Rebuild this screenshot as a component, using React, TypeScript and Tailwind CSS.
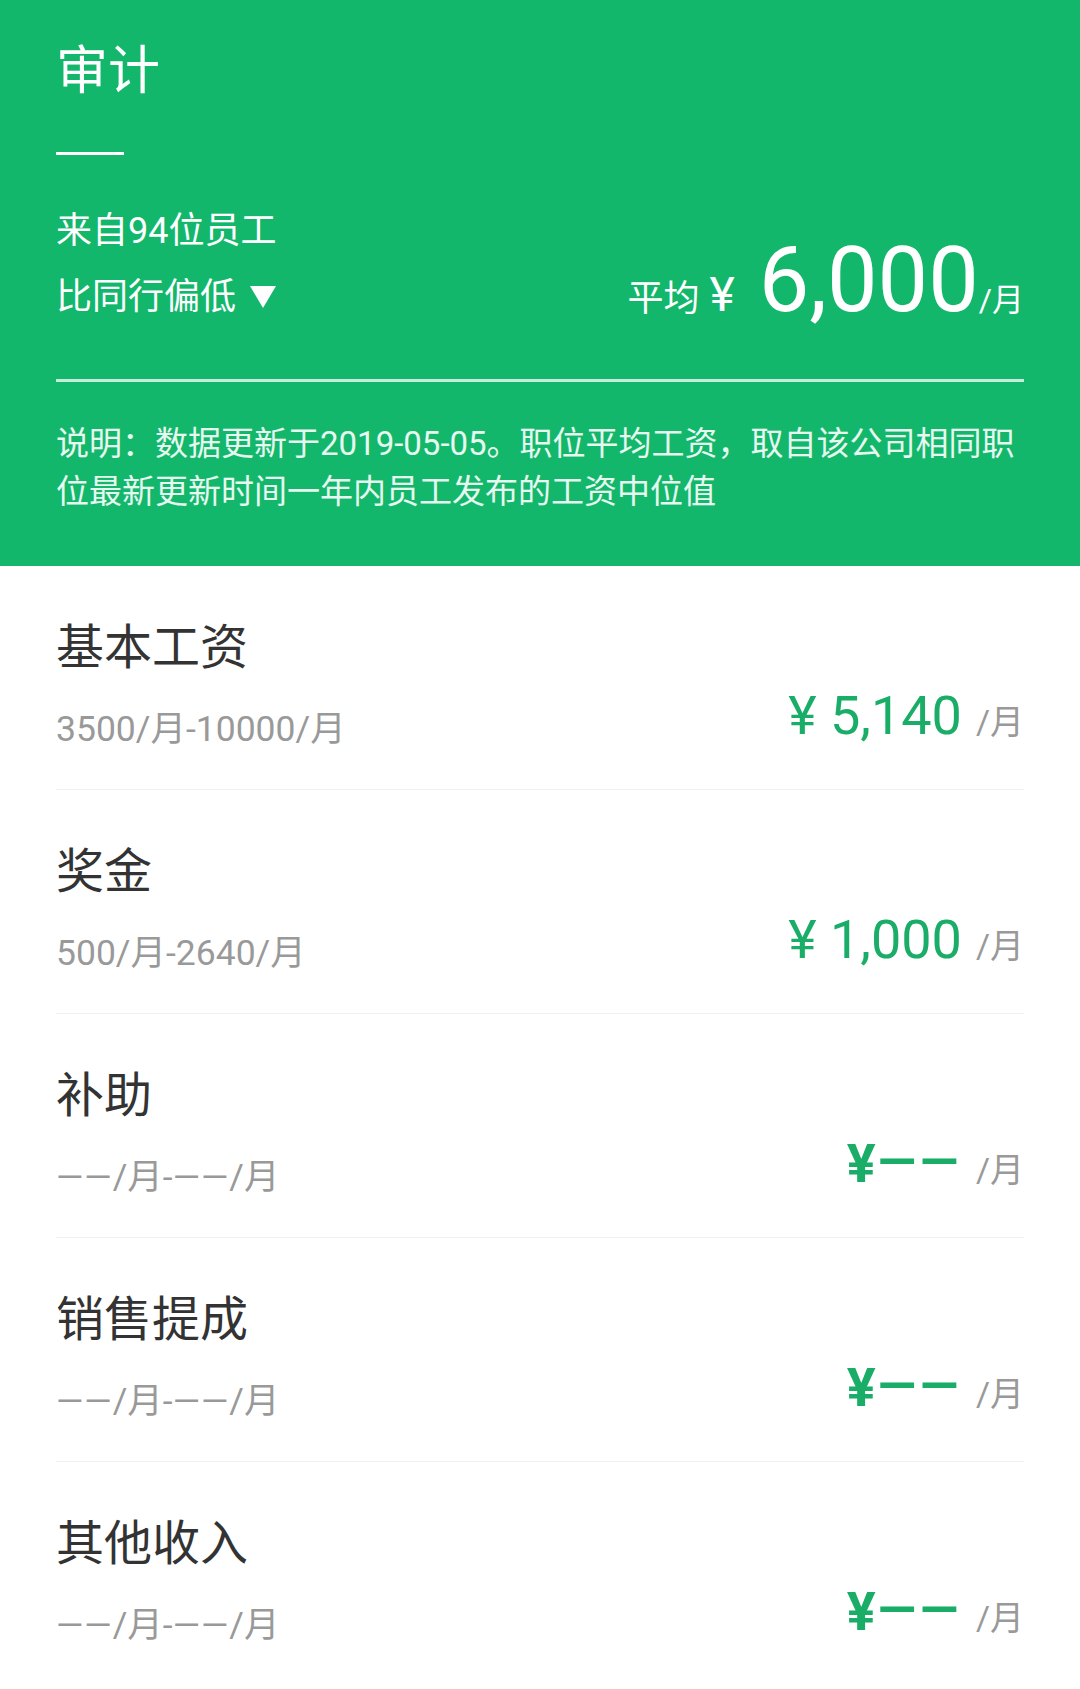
import type { ReactNode } from 'react'

type Row = {
  title: string
  range: ReactNode
  value: ReactNode
}

const Dash = () => <span className="text-[35px] leading-none tracking-[1px]">——</span>

const Empty = () => (
  <span className="text-[54px] leading-[60px] font-bold text-[#1aad68]">
    ¥
    <span className="ml-[2px] align-[3px] text-[50px] leading-none tracking-[4px]">——</span>
  </span>
)

const EmptyRange = () => (
  <>
    <Dash />/月-<Dash />/月
  </>
)

const rows: Row[] = [
  {
    title: '基本工资',
    range: '3500/月-10000/月',
    value: <span className="text-[54px] leading-[60px] text-[#1aad68]">¥ 5,140</span>,
  },
  {
    title: '奖金',
    range: '500/月-2640/月',
    value: <span className="text-[54px] leading-[60px] text-[#1aad68]">¥ 1,000</span>,
  },
  { title: '补助', range: <EmptyRange />, value: <Empty /> },
  { title: '销售提成', range: <EmptyRange />, value: <Empty /> },
  { title: '其他收入', range: <EmptyRange />, value: <Empty /> },
]

function SalaryRow({ row, last }: { row: Row; last: boolean }) {
  return (
    <div
      className={
        last
          ? 'flex items-end justify-between pt-[52px] pb-[39px]'
          : 'flex items-end justify-between border-b border-[#f0f0f0] pt-[52px] pb-[39px]'
      }
    >
      <div>
        <p className="text-[48px] leading-[60px] text-[#333]">{row.title}</p>
        <p className="mt-[30px] text-[35.5px] leading-[42px] text-[#999]">{row.range}</p>
      </div>
      <div className="mb-[4px] flex items-baseline">
        {row.value}
        <span className="ml-[14px] text-[34px] leading-none text-[#999]">/月</span>
      </div>
    </div>
  )
}

export default function App() {
  return (
    <div className="min-h-screen w-full bg-white font-['Roboto','Noto_Sans_CJK_SC',sans-serif]">
      {/* header */}
      <div className="bg-[#12b76b] px-[56px] pt-[42px] pb-[50px] text-white">
        <h1 className="text-[52px] leading-[60px]">审计</h1>
        <div className="mt-[50px] h-[3px] w-[68px] bg-white" />

        <div className="mt-[52px] flex items-end justify-between">
          <div>
            <p className="text-[36px] leading-[48px]">来自94位员工</p>
            <p className="mt-[18px] flex items-center text-[36px] leading-[48px]">
              比同行偏低
              <svg className="ml-[14px]" width="26" height="22" viewBox="0 0 26 22">
                <path d="M0 0h26L13 22z" fill="#fff" />
              </svg>
            </p>
          </div>
          <div className="flex items-baseline">
            <span className="text-[36px] leading-none">平均</span>
            <span className="ml-[10px] text-[48px] leading-none">¥</span>
            <span className="ml-[24px] text-[90px] leading-[80px]">6,000</span>
            <span className="text-[32px] leading-none">/月</span>
          </div>
        </div>

        <div className="mt-[58px] h-[3px] bg-white/75" />

        <p className="mt-[38px] text-[33px] leading-[48px] text-white/90">
          说明：数据更新于2019-05-05。职位平均工资，取自该公司相同职位最新更新时间一年内员工发布的工资中位值
        </p>
      </div>

      {/* breakdown */}
      <div className="px-[56px]">
        {rows.map((row, i) => (
          <SalaryRow key={row.title} row={row} last={i === rows.length - 1} />
        ))}
      </div>
    </div>
  )
}
